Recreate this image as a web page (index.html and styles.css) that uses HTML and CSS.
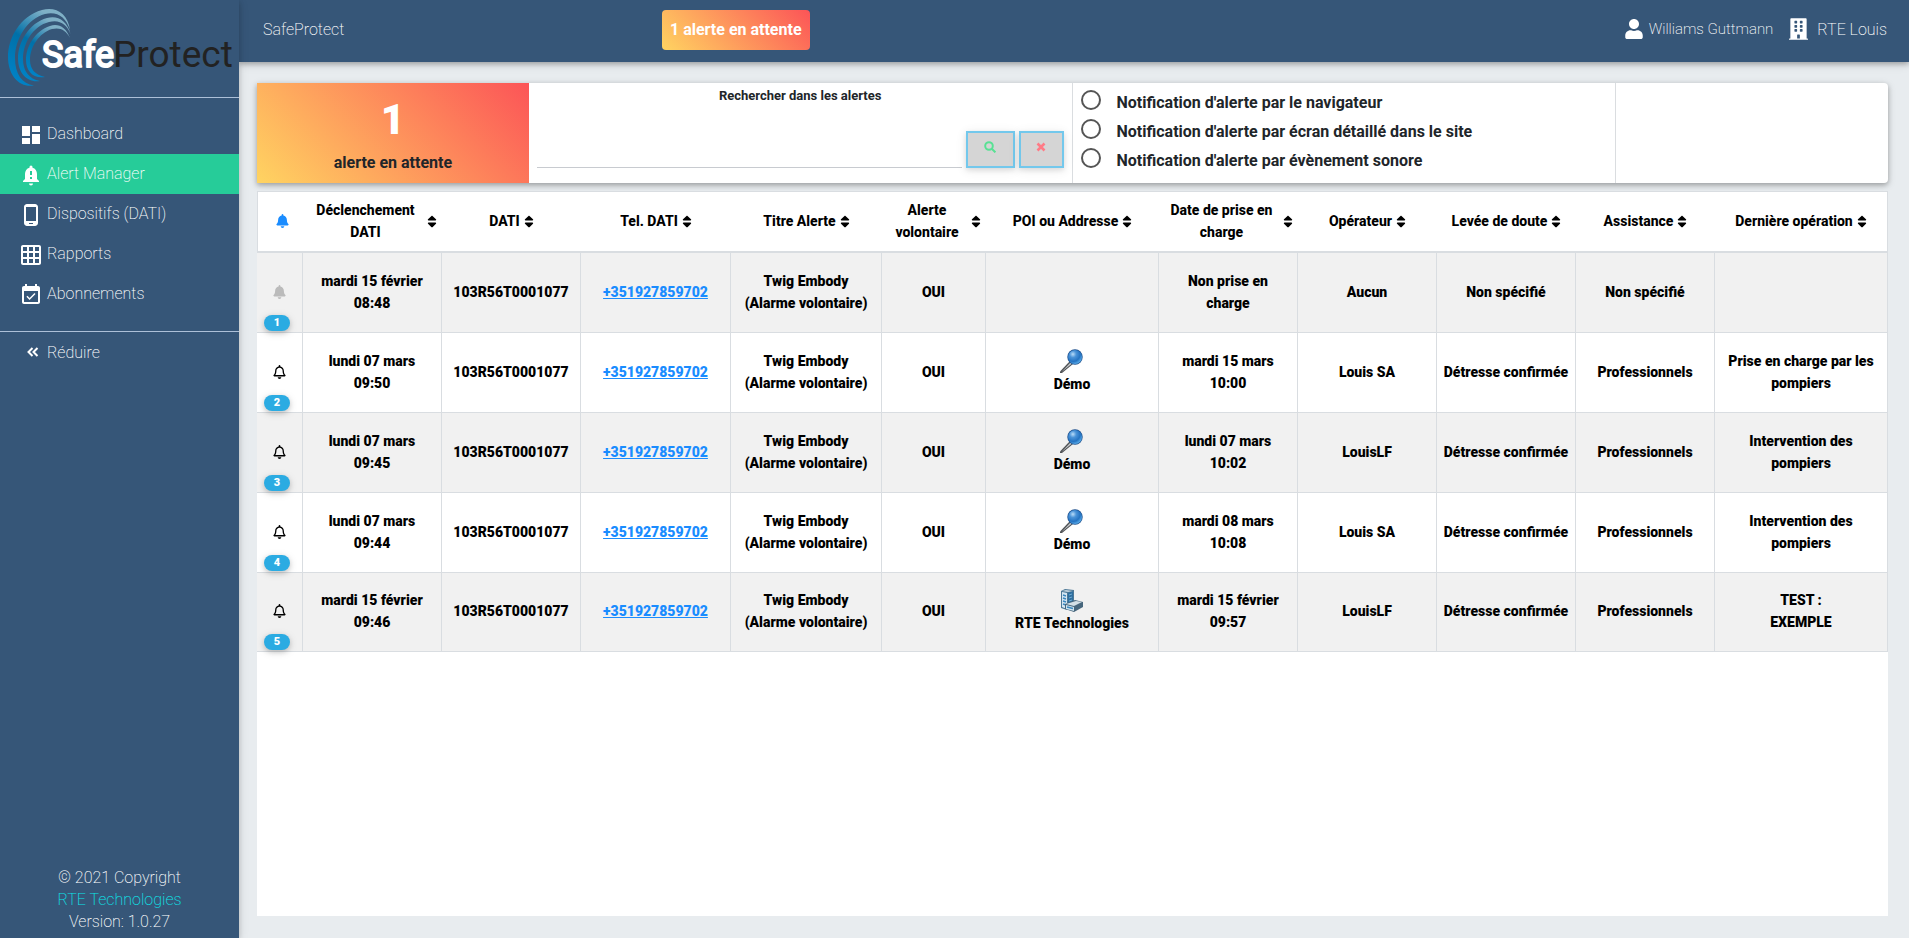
FILE: index.html
```html
<!DOCTYPE html>
<html lang="fr">
<head>
<meta charset="utf-8">
<title>SafeProtect - Alert Manager</title>
<link rel="stylesheet" href="styles.css">
</head>
<body>
<svg class="sprite" aria-hidden="true">
  <symbol id="bell" viewBox="0 0 448 512"><path d="M224 512c35.300 0 63.900-28.600 63.900-64H160.100c0 35.400 28.600 64 63.900 64zm215.400-149.700c-19.300-20.800-55.500-52-55.500-154.300 0-77.700-54.500-139.900-127.900-155.200V32c0-17.700-14.300-32-32-32s-32 14.300-32 32v20.800C118.600 68.100 64.100 130.300 64.100 208c0 102.300-36.200 133.500-55.500 154.300C2.600 368.700 0 376.400 0 384c.1 16.400 13 32 32.100 32h383.800c19.100 0 32-15.600 32.100-32 0-7.600-2.600-15.300-8.600-21.700z"/></symbol>
  <symbol id="bell-o" viewBox="0 0 448 512"><path d="M439.400 362.300c-19.300-20.800-55.500-52-55.500-154.300 0-77.700-54.500-139.900-127.900-155.200V32c0-17.700-14.300-32-32-32s-32 14.300-32 32v20.800C118.600 68.100 64.100 130.300 64.100 208c0 102.300-36.200 133.500-55.500 154.300C2.600 368.700 0 376.400 0 384c.1 16.400 13 32 32.100 32h383.800c19.100 0 32-15.600 32.100-32 0-7.600-2.600-15.300-8.600-21.700zM67.500 368c21.200-28 44.400-74.300 44.500-159.400 0-.2-.1-.4-.1-.6 0-61.900 50.100-112 112-112s112 50.100 112 112c0 .2-.1.4-.1.6.1 85.100 23.300 131.500 44.500 159.400H67.500zM224 512c35.300 0 63.900-28.600 63.900-64H160.100c0 35.400 28.600 64 63.900 64z"/></symbol>
  <symbol id="sort" viewBox="0 0 320 512"><path d="M41 288h238c21.400 0 32.100 25.900 17 41L177 448c-9.400 9.400-24.600 9.400-33.900 0L24 329c-15.100-15.100-4.400-41 17-41zm255-105L177 64c-9.400-9.400-24.600-9.400-33.900 0L24 183c-15.100 15.100-4.400 41 17 41h238c21.400 0 32.100-25.900 17-41z"/></symbol>
  <symbol id="pin" viewBox="0 0 24 24"><path d="M10 12 0 22.500V24h2L13 15z" fill="#505356"/><path d="m11 13-9.500 10L12 14.500z" fill="#c8cbce"/><circle cx="15" cy="8" r="7.700" fill="#1d4f8c"/><circle cx="15" cy="8" r="7" fill="url(#ball)"/></symbol>
  <symbol id="building-3d" viewBox="0 0 24 24"><path d="M1 3 5 1l9 1v19l-7 1-6-2z" fill="#4d7896"/><path d="m2 4 5 1v16l-5-2z" fill="#d5e6f2"/><path d="m8 5 5-2v12l-5 2z" fill="#2f6f9f"/><path d="m2 3 4-1 7 1-5 1z" fill="#c3d3de"/><path d="M3 7l3 1M3 10l3 1M3 13l3 1M3 16l3 1" stroke="#3a86bd" stroke-width="1.500"/><path d="m9 7 3-1m-3 4 3-1m-3 4 3-1" stroke="#6fabd2"/><path d="m5 16 10-4 8 2v5l-9 5-9-3z" fill="#46667c"/><path d="m6 16 10-3 6 1-8 4z" fill="#d2dfe6"/><path d="m6 17 8 2v4l-8-2z" fill="#cfe4f1"/><path d="m7 19 6 1.500" stroke="#3b88bd" stroke-width="1.500"/></symbol>
  <radialGradient id="ball" cx=".35" cy=".3" r=".8"><stop offset="0" stop-color="#b9dcf8"/><stop offset=".3" stop-color="#4a93d8"/><stop offset=".65" stop-color="#2473c2"/><stop offset="1" stop-color="#6cc0f7"/></radialGradient>
</svg>
<div class="app">
  <aside class="sidebar">
    <a class="logo" href="#" aria-label="SafeProtect">
      <svg viewBox="0 0 239 97">
        <defs><linearGradient id="swoosh" x1="0" y1="1" x2=".5" y2="0"><stop offset="0" stop-color="#0086cc"/><stop offset=".6" stop-color="#0070a8"/><stop offset="1" stop-color="#7fb0c6"/></linearGradient></defs>
        <g fill="url(#swoosh)">
          <path d="M70 30C68 13 55 6 42 10C20 16 8 38 8 57C8 76 20 88 34 85.500C22 84 15 74 15 58C15 39 27 19 45 14C57 11 66 17 70 30z"/>
          <path d="M70.500 34C67 20 57 15 47 18C29 23 18 42 18 58C18 73 27 83 40 81C29 79 23 71 23 59C23 43 33 26 49 22C59 19 67 24 70.500 34z"/>
          <path d="M70 38C66 27 58 23 50 26C35 31 26 46 26 60C26 71 33 79 45 77C35 75 30 69 30 60C30 47 39 33 52 29C60 27 66 30 70 38z"/>
        </g>
        <text class="logo-safe" x="42" y="67">Safe</text>
        <text class="logo-protect" x="113" y="67">Protect</text>
      </svg>
    </a>
    <nav class="menu">
      <a href="#"><svg viewBox="0 0 24 24"><path d="M3 13h8V3H3v10zm0 8h8v-6H3v6zm10 0h8V11h-8v10zm0-18v6h8V3h-8z"/></svg>Dashboard</a>
      <a href="#" class="active"><svg viewBox="0 0 24 24"><path d="M12 22.500a2 2 0 0 0 2-2h-4a2 2 0 0 0 2 2zM18 16v-5c0-3.070-1.640-5.640-4.500-6.320V4a1.500 1.500 0 0 0-3 0v.680C7.630 5.360 6 7.920 6 11v5l-2 2v1h16v-1l-2-2zm-5 0h-2v-2h2v2zm0-4h-2V8h2v4z"/></svg>Alert Manager</a>
      <a href="#"><svg viewBox="0 0 24 24"><path d="M16 1H8C6.340 1 5 2.340 5 4v16c0 1.660 1.340 3 3 3h8c1.660 0 3-1.340 3-3V4c0-1.660-1.340-3-3-3zm-2 20h-4v-1h4v1zm3-3H7V4h10v14z"/></svg>Dispositifs (DATI)</a>
      <a href="#"><svg viewBox="0 0 24 24"><path d="M20 2H4c-1.100 0-2 .9-2 2v16c0 1.100.9 2 2 2h16c1.100 0 2-.9 2-2V4c0-1.100-.9-2-2-2zM8 20H4v-4h4v4zm0-6H4v-4h4v4zm0-6H4V4h4v4zm6 12h-4v-4h4v4zm0-6h-4v-4h4v4zm0-6h-4V4h4v4zm6 12h-4v-4h4v4zm0-6h-4v-4h4v4zm0-6h-4V4h4v4z"/></svg>Rapports</a>
      <a href="#"><svg viewBox="0 0 24 24"><path d="M16.530 11.060 15.470 10l-4.880 4.880-2.120-2.120-1.060 1.060L10.590 17l5.940-5.940zM19 3h-1V1h-2v2H8V1H6v2H5c-1.110 0-2 .9-2 2v14c0 1.100.89 2 2 2h14c1.100 0 2-.9 2-2V5c0-1.100-.9-2-2-2zm0 16H5V8h14v11z"/></svg>Abonnements</a>
    </nav>
    <button class="collapse" type="button"><svg viewBox="0 0 12 10" fill="none" stroke="#fff" stroke-width="2"><path d="M5.500 1 1.500 5l4 4M10.500 1l-4 4 4 4"/></svg>Réduire</button>
    <footer class="copyright">
      <div>© 2021 Copyright</div>
      <div><a href="#">RTE Technologies</a></div>
      <div>Version: 1.0.27</div>
    </footer>
  </aside>
  <div class="page">
    <header class="topbar">
      <div class="brand">SafeProtect</div>
      <button class="pending" type="button">1 alerte en attente</button>
      <div class="account">
        <a href="#" class="person"><svg class="user" viewBox="0 0 448 512"><path d="M224 256c70.700 0 128-57.300 128-128S294.700 0 224 0 96 57.300 96 128s57.300 128 128 128zm89.600 32h-16.700c-22.200 10.200-46.900 16-72.900 16s-50.600-5.800-72.900-16h-16.700C60.200 288 0 348.200 0 422.400V464c0 26.500 21.500 48 48 48h352c26.500 0 48-21.500 48-48v-41.600c0-74.200-60.200-134.400-134.400-134.400z"/></svg>Williams Guttmann</a>
        <a href="#"><svg class="building" viewBox="0 0 448 512"><path d="M436 480h-20V24c0-13.255-10.745-24-24-24H56C42.745 0 32 10.745 32 24v456H12c-6.627 0-12 5.373-12 12v20h448v-20c0-6.627-5.373-12-12-12zM128 76c0-6.627 5.373-12 12-12h40c6.627 0 12 5.373 12 12v40c0 6.627-5.373 12-12 12h-40c-6.627 0-12-5.373-12-12V76zm0 96c0-6.627 5.373-12 12-12h40c6.627 0 12 5.373 12 12v40c0 6.627-5.373 12-12 12h-40c-6.627 0-12-5.373-12-12v-40zm52 148h-40c-6.627 0-12-5.373-12-12v-40c0-6.627 5.373-12 12-12h40c6.627 0 12 5.373 12 12v40c0 6.627-5.373 12-12 12zm76 160h-64v-84c0-6.627 5.373-12 12-12h40c6.627 0 12 5.373 12 12v84zm64-172c0 6.627-5.373 12-12 12h-40c-6.627 0-12-5.373-12-12v-40c0-6.627 5.373-12 12-12h40c6.627 0 12 5.373 12 12v40zm0-96c0 6.627-5.373 12-12 12h-40c-6.627 0-12-5.373-12-12v-40c0-6.627 5.373-12 12-12h40c6.627 0 12 5.373 12 12v40zm0-96c0 6.627-5.373 12-12 12h-40c-6.627 0-12-5.373-12-12V76c0-6.627 5.373-12 12-12h40c6.627 0 12 5.373 12 12v40z"/></svg>RTE Louis</a>
      </div>
    </header>
    <main class="content">
      <section class="card">
        <div class="counter"><strong>1</strong><span>alerte en attente</span></div>
        <form class="search">
          <label for="q">Rechercher dans les alertes</label>
          <div class="search-row">
            <input id="q" type="text">
            <button type="button" class="find" disabled aria-label="Rechercher"><svg viewBox="0 0 12 12" fill="none" stroke="#00d25b" stroke-width="2"><circle cx="5" cy="5" r="3.800"/><path d="m7.800 7.800 3.600 3.600"/></svg></button>
            <button type="button" class="clear" disabled aria-label="Effacer"><svg viewBox="0 0 12 12" fill="none" stroke="#ff3547" stroke-width="2.600"><path d="m2.500 2.500 7 7m0-7-7 7"/></svg></button>
          </div>
        </form>
        <div class="options">
          <label><input type="radio" name="n1">Notification d'alerte par le navigateur</label>
          <label><input type="radio" name="n2">Notification d'alerte par écran détaillé dans le site</label>
          <label><input type="radio" name="n3">Notification d'alerte par évènement sonore</label>
        </div>
        <div class="spare"></div>
      </section>
      <section class="list">
        <table>
          <colgroup><col class="c-bell"><col class="c-std"><col class="c-std"><col class="c-phone"><col class="c-title"><col class="c-small"><col class="c-wide"><col class="c-std"><col class="c-std"><col class="c-std"><col class="c-std"><col class="c-wide"></colgroup>
          <thead><tr>
            <th><svg class="bell blue"><use href="#bell"/></svg></th>
            <th><div class="head"><span>Déclenchement DATI</span><svg class="sort"><use href="#sort"/></svg></div></th>
            <th><div class="head"><span>DATI</span><svg class="sort"><use href="#sort"/></svg></div></th>
            <th><div class="head"><span>Tel. DATI</span><svg class="sort"><use href="#sort"/></svg></div></th>
            <th><div class="head"><span>Titre Alerte</span><svg class="sort"><use href="#sort"/></svg></div></th>
            <th><div class="head"><span>Alerte volontaire</span><svg class="sort"><use href="#sort"/></svg></div></th>
            <th><div class="head"><span>POI ou Addresse</span><svg class="sort"><use href="#sort"/></svg></div></th>
            <th><div class="head"><span>Date de prise en charge</span><svg class="sort"><use href="#sort"/></svg></div></th>
            <th><div class="head"><span>Opérateur</span><svg class="sort"><use href="#sort"/></svg></div></th>
            <th><div class="head"><span>Levée de doute</span><svg class="sort"><use href="#sort"/></svg></div></th>
            <th><div class="head"><span>Assistance</span><svg class="sort"><use href="#sort"/></svg></div></th>
            <th><div class="head"><span>Dernière opération</span><svg class="sort"><use href="#sort"/></svg></div></th>
          </tr></thead>
          <tbody>
            <tr>
              <td class="state"><svg class="bell grey"><use href="#bell"/></svg><span class="badge">1</span></td>
              <td>mardi 15 février<br>08:48</td><td>103R56T0001077</td><td><a href="#">+351927859702</a></td><td>Twig Embody<br>(Alarme volontaire)</td><td>OUI</td><td></td><td>Non prise en<br>charge</td><td>Aucun</td><td>Non spécifié</td><td>Non spécifié</td><td></td>
            </tr>
            <tr>
              <td class="state"><svg class="bell"><use href="#bell-o"/></svg><span class="badge">2</span></td>
              <td>lundi 07 mars<br>09:50</td><td>103R56T0001077</td><td><a href="#">+351927859702</a></td><td>Twig Embody<br>(Alarme volontaire)</td><td>OUI</td><td><svg class="poi"><use href="#pin"/></svg>Démo</td><td>mardi 15 mars<br>10:00</td><td>Louis SA</td><td>Détresse confirmée</td><td>Professionnels</td><td>Prise en charge par les pompiers</td>
            </tr>
            <tr>
              <td class="state"><svg class="bell"><use href="#bell-o"/></svg><span class="badge">3</span></td>
              <td>lundi 07 mars<br>09:45</td><td>103R56T0001077</td><td><a href="#">+351927859702</a></td><td>Twig Embody<br>(Alarme volontaire)</td><td>OUI</td><td><svg class="poi"><use href="#pin"/></svg>Démo</td><td>lundi 07 mars<br>10:02</td><td>LouisLF</td><td>Détresse confirmée</td><td>Professionnels</td><td>Intervention des pompiers</td>
            </tr>
            <tr>
              <td class="state"><svg class="bell"><use href="#bell-o"/></svg><span class="badge">4</span></td>
              <td>lundi 07 mars<br>09:44</td><td>103R56T0001077</td><td><a href="#">+351927859702</a></td><td>Twig Embody<br>(Alarme volontaire)</td><td>OUI</td><td><svg class="poi"><use href="#pin"/></svg>Démo</td><td>mardi 08 mars<br>10:08</td><td>Louis SA</td><td>Détresse confirmée</td><td>Professionnels</td><td>Intervention des pompiers</td>
            </tr>
            <tr>
              <td class="state"><svg class="bell"><use href="#bell-o"/></svg><span class="badge">5</span></td>
              <td>mardi 15 février<br>09:46</td><td>103R56T0001077</td><td><a href="#">+351927859702</a></td><td>Twig Embody<br>(Alarme volontaire)</td><td>OUI</td><td><svg class="poi"><use href="#building-3d"/></svg>RTE Technologies</td><td>mardi 15 février<br>09:57</td><td>LouisLF</td><td>Détresse confirmée</td><td>Professionnels</td><td>TEST :<br>EXEMPLE</td>
            </tr>
          </tbody>
        </table>
      </section>
    </main>
  </div>
</div>
</body>
</html>
```

FILE: styles.css
```css
* { box-sizing: border-box; }
body {
  margin: 0;
  font-family: Roboto, "Liberation Sans", sans-serif;
  font-size: 16px;
  font-weight: 300;
  color: #212529;
  background: #e8ecef;
}
button, input { font: inherit; color: inherit; }
a { color: inherit; text-decoration: none; }
.sprite { position: absolute; width: 0; height: 0; }
.app { display: flex; min-height: 100vh; }

/* Sidebar */
.sidebar {
  flex: 0 0 239px;
  display: flex;
  flex-direction: column;
  background: #365678;
  color: #fff;
  font-weight: 200;
  box-shadow: 0 2px 5px rgba(0, 0, 0, .16), 0 2px 10px rgba(0, 0, 0, .12);
  z-index: 2;
}
.logo { display: block; height: 98px; border-bottom: 1px solid #adc0d8; }
.logo svg { display: block; width: 100%; height: 97px; }
.logo text { font-size: 37px; stroke-linejoin: round; }
.logo .logo-safe { font-size: 36px; fill: #fff; font-weight: 400; stroke: #fff; stroke-width: 2px; }
.logo-protect { fill: #222; font-weight: 400; }
.menu { padding: 16px 0 17px; border-bottom: 1px solid #adc0d8; }
.menu a { display: flex; align-items: center; height: 40px; padding: 0 19px 1px; gap: 4px; }
.menu svg { width: 24px; height: 24px; margin-top: 3px; fill: #fff; }
.menu .active { background: #26cc99; }
.collapse {
  display: flex;
  align-items: center;
  gap: 8px;
  height: 40px;
  padding: 0 27px;
  border: 0;
  background: none;
}
.collapse svg { width: 12px; height: 10px; }
.copyright { margin-top: auto; padding-bottom: 5px; text-align: center; line-height: 22px; }
.copyright a { color: #0de3e8; }

/* Top bar */
.page { flex: 1; min-width: 0; display: flex; flex-direction: column; }
.topbar {
  display: grid;
  grid-template-columns: 25% auto 1fr;
  align-items: center;
  height: 62px;
  padding-right: 22px;
  padding-bottom: 2px;
  background: #365678;
  color: #fff;
  font-weight: 200;
  box-shadow: 0 2px 5px rgba(0, 0, 0, .26), 0 2px 10px rgba(0, 0, 0, .12);
}
.brand { padding: 0 0 2px 24px; }
.pending {
  height: 40px;
  margin-left: 11px;
  padding: 0 8px 2px;
  border: 0;
  border-radius: 4px;
  font-weight: 700;
  background: linear-gradient(45deg, #ffd461, #fc5457);
}
.account { display: flex; justify-content: flex-end; gap: 16px; padding-bottom: 2px; }
.account a { display: flex; align-items: center; gap: 6px; }
.account .person { font-size: 15px; }
.account svg { fill: #fff; }
.user { width: 18px; height: 20px; }
.building { width: 19px; height: 22px; margin-right: 3px; }

/* Summary card */
.content { flex: 1; display: flex; flex-direction: column; gap: 8px; padding: 21px 21px 22px 18px; }
.card {
  display: grid;
  grid-template-columns: 1fr 2fr 2fr 1fr;
  min-height: 100px;
  border-radius: 0 4px 4px 0;
  background: #fff;
  box-shadow: 0 2px 5px rgba(0, 0, 0, .26), 0 2px 10px rgba(0, 0, 0, .12);
}
.counter {
  display: flex;
  flex-direction: column;
  align-items: center;
  font-weight: 700;
  background: linear-gradient(45deg, #ffd461, #fc5457);
}
.counter strong { padding-top: 13px; font-size: 42px; line-height: 48px; color: #fff; }
.counter span { padding-top: 7px; line-height: 24px; }
.search { display: flex; flex-direction: column; padding: 3px 8px 15px; border-right: 1px solid #dadde0; }
.search label { text-align: center; font-size: 13px; font-weight: 700; line-height: 20px; }
.search-row { display: flex; align-items: flex-end; gap: 4px; margin-top: auto; }
.search input { flex: 1; min-width: 0; height: 36px; border: 0; border-bottom: 1px solid #c8cbd0; outline: 0; }
.search button {
  width: 45px;
  height: 37px;
  padding: 0 0 5px;
  border: 2px solid #29abe2;
  background: #c0c0c0;
  box-shadow: 0 2px 5px rgba(0, 0, 0, .16), 0 2px 10px rgba(0, 0, 0, .12);
  opacity: .65;
}
.search .find { width: 49px; }
.search button svg { width: 12px; height: 12px; }
.options { display: flex; flex-direction: column; padding: 5px 8px; border-right: 1px solid #dadde0; }
.options label { display: flex; align-items: center; gap: 16px; height: 29px; font-weight: 700; }
.options input { appearance: none; width: 20px; height: 20px; margin: 0 0 5px; border: 2px solid #555; border-radius: 50%; }
.spare { min-width: 0; }

/* Alert list */
.list { flex: 1; background: #fff; }
table {
  width: 100%;
  table-layout: fixed;
  border-collapse: separate;
  border-spacing: 0;
  font-size: 14px;
  font-weight: 900;
  line-height: 22px;
  text-align: center;
  color: #000;
}
.c-bell { width: 46px; }
.c-std { width: 139px; }
.c-phone { width: 150px; }
.c-title { width: 151px; }
.c-small { width: 104px; }
.c-wide { width: 173px; }
th { height: 62px; padding: 0 5px 1px; border-top: 1px solid #d9dde1; border-bottom: 2px solid #d9dde1; font-weight: 800; }
th:first-child { padding-left: 9px; border-left: 1px solid #d9dde1; }
th:last-child { border-right: 1px solid #d9dde1; }
td { height: 80px; padding: 0 5px 2px; border-right: 1px solid #d9dde1; border-bottom: 1px solid #d9dde1; }
tbody tr:last-child td { height: 79px; }
tbody tr:nth-child(odd) { background: #f1f1f1; }
td a { color: #1a8cff; text-decoration: underline; }
.head { display: flex; align-items: center; justify-content: center; gap: 4px; }
.sort { flex: none; width: 10px; height: 15px; }
.bell { display: block; width: 13px; height: 14px; margin: 0 auto; }
.blue { fill: #1a8cff; }
.grey { fill: #bbb; }
.poi { display: block; width: 24px; height: 24px; margin: 0 auto; }
.state { position: relative; }
.badge {
  position: absolute;
  left: 7px;
  bottom: 1px;
  width: 26px;
  height: 16px;
  border-radius: 8px;
  background: #2babe2;
  box-shadow: 0 2px 5px rgba(0, 0, 0, .16), 0 2px 10px rgba(0, 0, 0, .12);
  color: #fff;
  font-size: 11px;
  line-height: 15px;
}
```
